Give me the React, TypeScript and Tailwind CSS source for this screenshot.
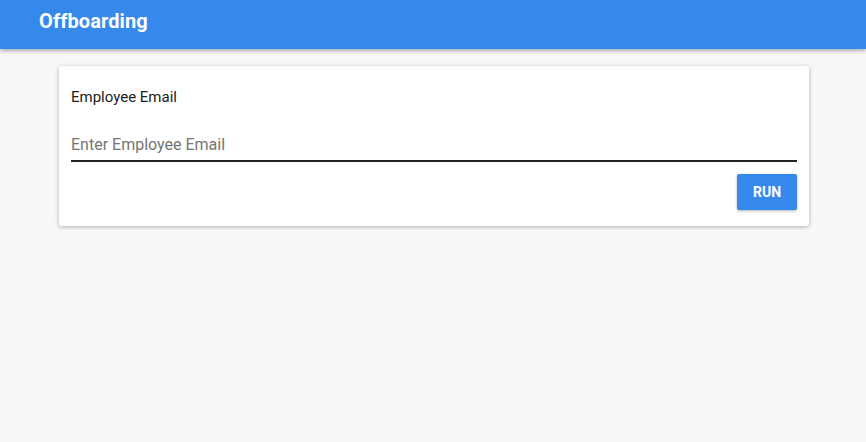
import { useState } from "react";

export default function App() {
  const [email, setEmail] = useState("");

  return (
    <div className="min-h-screen w-full bg-[#f8f8f8] font-['Roboto',sans-serif]">
      {/* Top app bar */}
      <header className="h-[49px] w-full bg-[#3589ea] flex items-center px-[39px] pb-[7px] shadow-[0_2px_4px_rgba(0,0,0,0.3)]">
        <h1 className="text-[20px] font-bold text-white tracking-[0.1px]">Offboarding</h1>
      </header>

      {/* Form card */}
      <main className="px-[59px] pt-[17px]">
        <div className="w-[750px] bg-white rounded-[2px] shadow-[0_1px_4px_rgba(0,0,0,0.3)] px-3 pt-[22px] pb-4">
          <label className="block text-[15px] text-[#212121] leading-[18px]">Employee Email</label>
          <input
            value={email}
            onChange={(e) => setEmail(e.target.value)}
            placeholder="Enter Employee Email"
            className="mt-[29px] w-full text-[16px] leading-[20px] pb-[5px] text-[#212121] placeholder:text-[#757575] border-b-2 border-[#212121] outline-none bg-transparent"
          />
          <div className="flex justify-end mt-[12px]">
            <button className="w-[60px] h-[36px] rounded-[2px] bg-[#3589ea] text-white text-[14px] font-bold shadow-[0_1px_3px_rgba(0,0,0,0.3)]">
              RUN
            </button>
          </div>
        </div>
      </main>
    </div>
  );
}
